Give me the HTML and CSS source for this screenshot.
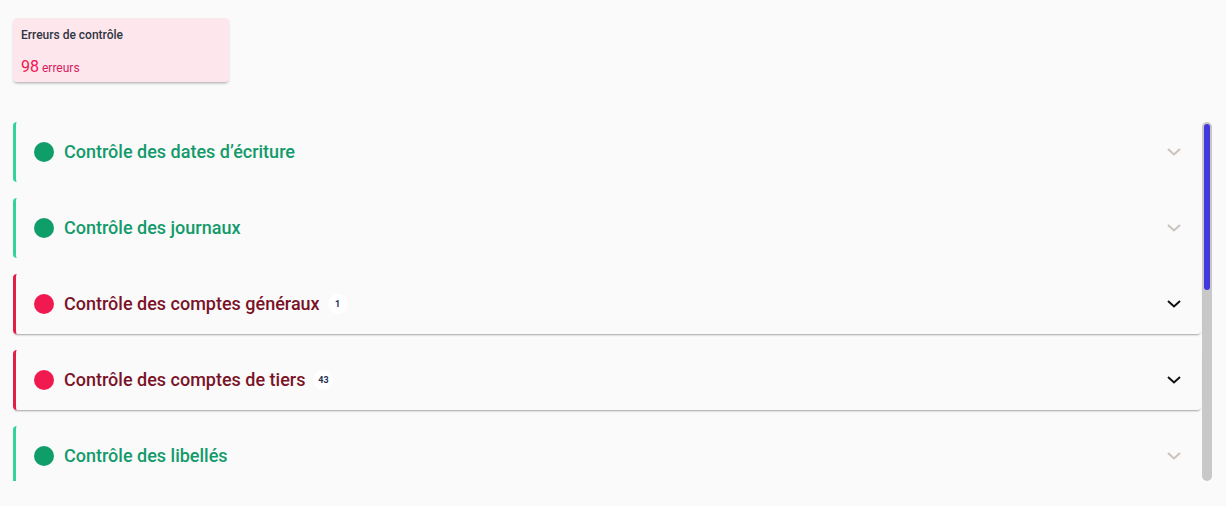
FILE: index.html
```html
<!DOCTYPE html>
<html lang="fr">
  <head>
    <meta charset="UTF-8" />
    <meta name="viewport" content="width=device-width, initial-scale=1.0" />
    <title>Contrôles</title>
    <link rel="stylesheet" href="styles.css">
  </head>
  <body>
    <div class="page">
      <!-- carte résumé -->
      <div class="summary">
        <div class="summary-title">Erreurs de contrôle</div>
        <div class="summary-value"><span class="num">98</span> erreurs</div>
      </div>

      <!-- liste des contrôles + barre de défilement -->
      <div class="list">
        <div class="items">
          <div class="item ok">
            <span class="dot"></span>
            <span class="label">Contrôle des dates d’écriture</span>
            <svg class="chev" viewBox="0 0 14 8"><path d="M1 1l6 5.5L13 1" /></svg>
          </div>
          <div class="item ok">
            <span class="dot"></span>
            <span class="label">Contrôle des journaux</span>
            <svg class="chev" viewBox="0 0 14 8"><path d="M1 1l6 5.5L13 1" /></svg>
          </div>
          <div class="item ko">
            <span class="dot"></span>
            <span class="label">Contrôle des comptes généraux</span>
            <span class="badge">1</span>
            <svg class="chev" viewBox="0 0 14 8"><path d="M1 1l6 5.5L13 1" /></svg>
          </div>
          <div class="item ko">
            <span class="dot"></span>
            <span class="label">Contrôle des comptes de tiers</span>
            <span class="badge">43</span>
            <svg class="chev" viewBox="0 0 14 8"><path d="M1 1l6 5.5L13 1" /></svg>
          </div>
          <div class="item ok">
            <span class="dot"></span>
            <span class="label">Contrôle des libellés</span>
            <svg class="chev" viewBox="0 0 14 8"><path d="M1 1l6 5.5L13 1" /></svg>
          </div>
        </div>
        <div class="scrollbar"><div class="thumb"></div></div>
      </div>
    </div>
  </body>
</html>
```

FILE: styles.css
```css
* {
  margin: 0;
  padding: 0;
  box-sizing: border-box;
}
body {
  background: #fafafa;
  font-family: Roboto, "Liberation Sans", sans-serif;
}
.page {
  padding: 18px 14px 0 13px;
}
/* carte résumé */
.summary {
  width: 216px;
  height: 64px;
  background: #fde6ec;
  border-radius: 4px;
  box-shadow: 0 2px 3px -1px rgba(0, 0, 0, 0.35);
  padding: 10px 8px;
}
.summary-title {
  font-size: 12px;
  font-weight: 500;
  color: #2f3542;
  line-height: 14px;
}
.summary-value {
  margin-top: 15px;
  font-size: 12px;
  color: #d81b60;
  line-height: 20px;
}
.summary-value .num {
  font-size: 16px;
  color: #f0164f;
}
/* liste */
.list {
  margin-top: 40px;
  height: 359px;
  display: flex;
}
.items {
  flex: 1;
  overflow: hidden;
  display: flex;
  flex-direction: column;
  gap: 16px;
  padding-right: 1px;
}
.scrollbar {
  width: 10px;
  background: #c8c8c8;
  border-radius: 5px;
  padding: 2px;
}
.thumb {
  height: 166px;
  background: #4338dc;
  border-radius: 3px;
}
.item {
  flex: 0 0 60px;
  display: flex;
  align-items: center;
  border-left: 3px solid;
  border-radius: 4px;
  padding: 0 20px 1px 18px;
}
.item .dot {
  width: 20px;
  height: 20px;
  border-radius: 50%;
  margin-right: 10px;
}
.item .label {
  font-size: 18px;
  font-weight: 500;
}
.item .badge {
  width: 20px;
  height: 20px;
  border-radius: 50%;
  background: #fff;
  margin-left: 8px;
  font-size: 9px;
  font-weight: 700;
  color: #1e2f4f;
  display: flex;
  align-items: center;
  justify-content: center;
}
.item .chev {
  margin-left: auto;
  width: 14px;
  height: 8px;
  fill: none;
  stroke-width: 2;
}
.item.ok {
  border-color: #34d399;
}
.item.ok .dot {
  background: #0f9d6a;
}
.item.ok .label {
  color: #139a6b;
}
.item.ok .chev {
  stroke: #cbc3bb;
}
.item.ko {
  border-color: #e11d48;
  box-shadow: 0 2px 2px -1px rgba(0, 0, 0, 0.35);
}
.item.ko .dot {
  background: #f11a50;
}
.item.ko .label {
  color: #7a1328;
}
.item.ko .chev {
  stroke: #111;
}
```
